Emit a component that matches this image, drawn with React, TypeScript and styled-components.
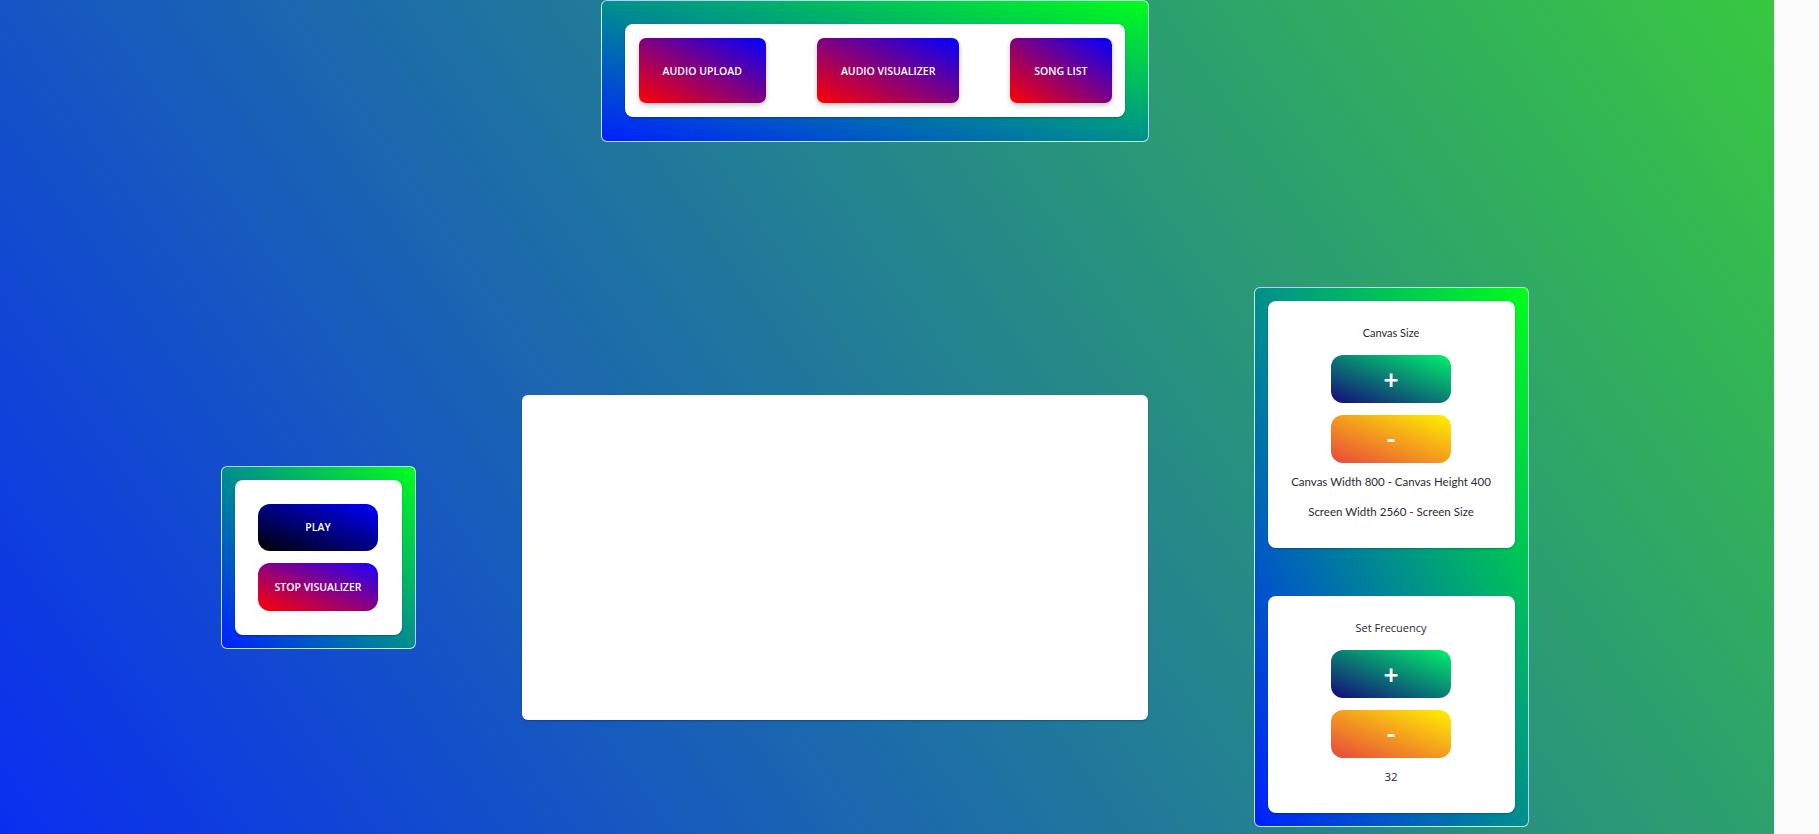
import React from 'react';
import styled, { createGlobalStyle } from 'styled-components';

const GlobalStyle = createGlobalStyle`
  * {
    box-sizing: border-box;
  }

  html, body {
    margin: 0;
    padding: 0;
    background: #fcfcfc;
    font-family: 'Open Sans', 'Liberation Sans', sans-serif;
  }
`;

const Page = styled.div`
  display: flex;
  min-height: 100vh;
`;

const Main = styled.main`
  width: 1774px;
  min-height: 834px;
  padding-right: 25px;
  display: flex;
  flex-direction: column;
  align-items: center;
  background: linear-gradient(55deg, #0a2ef0 0%, #38c840 100%);
`;

const Gutter = styled.div`
  flex: 1;
  background: #fcfcfc;
`;

const Frame = styled.div`
  padding: 13px;
  border: 1px solid rgba(255, 255, 255, 0.75);
  border-radius: 6px;
  background: linear-gradient(to top right, #0020ff 0%, #00ff1a 100%);
`;

const NavFrame = styled(Frame)`
  width: 548px;
  height: 142px;
  padding: 23px 23px 24px;
`;

const Card = styled.div`
  background: #ffffff;
  border-radius: 8px;
  box-shadow: 0 1px 2px rgba(0, 0, 0, 0.25);
`;

const NavCard = styled(Card)`
  height: 93px;
  padding: 14px 13px 14px 14px;
  display: flex;
  justify-content: space-between;
  align-items: center;
`;

const NavButton = styled.button`
  height: 65px;
  padding: 0 24px;
  border: none;
  border-radius: 7px;
  color: #ffffff;
  font-family: 'Open Sans', 'Liberation Sans', sans-serif;
  font-size: 10.5px;
  font-weight: 600;
  background: linear-gradient(to top right, #ff0000 0%, #0000ff 100%);
  box-shadow: 0 2px 5px rgba(0, 0, 0, 0.25);
  cursor: pointer;
`;

const Stage = styled.div`
  margin-top: 145px;
  display: flex;
  align-items: center;
  gap: 106px;
`;

const PlayerFrame = styled(Frame)`
  width: 195px;
  height: 183px;
`;

const PlayerCard = styled(Card)`
  height: 100%;
  padding: 24px;
  display: flex;
  flex-direction: column;
  align-items: center;
  gap: 12px;
`;

const PillButton = styled.button<{ $from: string; $to: string }>`
  width: 120px;
  height: 48px;
  border: none;
  border-radius: 12px;
  color: #ffffff;
  font-family: 'Open Sans', 'Liberation Sans', sans-serif;
  font-size: 10.5px;
  font-weight: 600;
  background: linear-gradient(to top right, ${p => p.$from} 0%, ${p => p.$to} 100%);
  cursor: pointer;
`;

const StepButton = styled(PillButton)`
  font-family: 'Lato', 'Open Sans', sans-serif;
  font-size: 26px;
  font-weight: 700;
  line-height: 1;
`;

const CanvasBox = styled.div`
  width: 626px;
  height: 325px;
  background: #ffffff;
  border-radius: 6px;
  box-shadow: 0 1px 2px rgba(0, 0, 0, 0.3);
`;

const ControlsFrame = styled(Frame)`
  width: 275px;
  height: 540px;
  display: flex;
  flex-direction: column;
  justify-content: space-between;
`;

const ControlCard = styled(Card)<{ $font: string }>`
  padding: 24px 12px 28px;
  display: flex;
  flex-direction: column;
  align-items: center;
  gap: 12px;
  font-family: ${p => p.$font};
  color: #2b2b33;
`;

const CardTitle = styled.p`
  margin: 0 0 2px;
  font-size: 11px;
  line-height: 16px;
`;

const InfoList = styled.div`
  display: flex;
  flex-direction: column;
  align-items: center;
  gap: 14px;
  margin-top: -1px;
`;

const InfoText = styled.p`
  margin: 0;
  font-size: 11.5px;
  line-height: 16px;
  white-space: nowrap;
`;

const PLUS = ['#15097a', '#00f26d'] as const;
const MINUS = ['#e8473c', '#fff200'] as const;

const StepButtons: React.FC = () => (
  <>
    <StepButton $from={PLUS[0]} $to={PLUS[1]}>+</StepButton>
    <StepButton $from={MINUS[0]} $to={MINUS[1]}>-</StepButton>
  </>
);

const App: React.FC = () => {
  return (
    <Page>
      <GlobalStyle />
      <Main>
        <NavFrame>
          <NavCard>
            <NavButton>AUDIO UPLOAD</NavButton>
            <NavButton>AUDIO VISUALIZER</NavButton>
            <NavButton>SONG LIST</NavButton>
          </NavCard>
        </NavFrame>

        <Stage>
          <PlayerFrame>
            <PlayerCard>
              <PillButton $from="#000000" $to="#0000ff">PLAY</PillButton>
              <PillButton $from="#ff0000" $to="#1a00ff">STOP VISUALIZER</PillButton>
            </PlayerCard>
          </PlayerFrame>

          <CanvasBox />

          <ControlsFrame>
            <ControlCard $font="'Lato', 'Open Sans', sans-serif">
              <CardTitle>Canvas Size</CardTitle>
              <StepButtons />
              <InfoList>
                <InfoText>Canvas Width 800 - Canvas Height 400</InfoText>
                <InfoText>Screen Width 2560 - Screen Size</InfoText>
              </InfoList>
            </ControlCard>

            <ControlCard $font="'Open Sans', 'Liberation Sans', sans-serif">
              <CardTitle>Set Frecuency</CardTitle>
              <StepButtons />
              <InfoList>
                <InfoText>32</InfoText>
              </InfoList>
            </ControlCard>
          </ControlsFrame>
        </Stage>
      </Main>
      <Gutter />
    </Page>
  );
};

export default App;
